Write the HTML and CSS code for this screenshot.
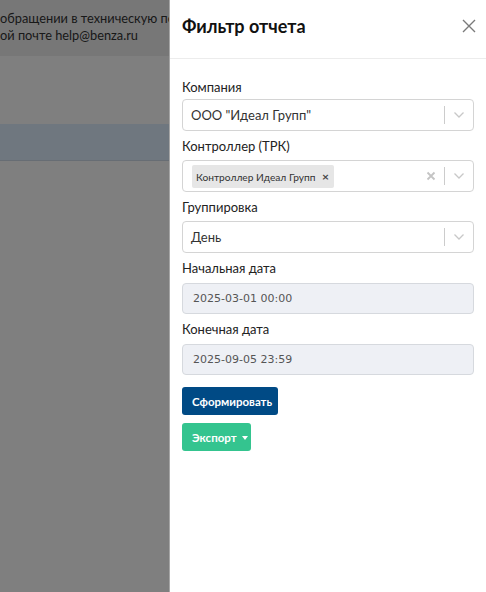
FILE: index.html
```html
<!DOCTYPE html>
<html lang="ru">
<head>
<meta charset="utf-8">
<link rel="stylesheet" href="styles.css">
</head>
<body>
<div class="page">
  <div class="notice">
    <p>обращении в техническую под</p>
    <p>ой почте help@benza.ru</p>
  </div>
  <div class="spacer"></div>
  <div class="table-head"></div>
  <div class="table-body"></div>
</div>
<div class="backdrop"></div>
<aside class="panel">
  <header class="panel-header">
    <h5 class="panel-title">Фильтр отчета</h5>
    <button class="close" aria-label="Закрыть">
      <svg width="14" height="14" viewBox="0 0 14 14"><path d="M1 1L13 13M13 1L1 13" stroke="#7a7a7a" stroke-width="1.4" fill="none"/></svg>
    </button>
  </header>
  <div class="panel-body">
    <div class="field">
      <label class="label">Компания</label>
      <div class="select">
        <span class="value">ООО "Идеал Групп"</span>
        <span class="sep"></span>
        <span class="chev"><svg width="12" height="8" viewBox="0 0 12 8"><path d="M1.5 1.5L6 6L10.5 1.5" stroke="#c8c8c8" stroke-width="1.3" fill="none"/></svg></span>
      </div>
    </div>
    <div class="field">
      <label class="label">Контроллер (ТРК)</label>
      <div class="select">
        <span class="chip">Контроллер Идеал Групп <span class="chip-x">×</span></span>
        <span class="clear"><svg width="10" height="10" viewBox="0 0 10 10"><path d="M1.5 1.5L8.5 8.5M8.5 1.5L1.5 8.5" stroke="#c4c4c4" stroke-width="1.8" fill="none"/></svg></span>
        <span class="sep"></span>
        <span class="chev"><svg width="12" height="8" viewBox="0 0 12 8"><path d="M1.5 1.5L6 6L10.5 1.5" stroke="#c8c8c8" stroke-width="1.3" fill="none"/></svg></span>
      </div>
    </div>
    <div class="field">
      <label class="label">Группировка</label>
      <div class="select">
        <span class="value">День</span>
        <span class="sep"></span>
        <span class="chev"><svg width="12" height="8" viewBox="0 0 12 8"><path d="M1.5 1.5L6 6L10.5 1.5" stroke="#c8c8c8" stroke-width="1.3" fill="none"/></svg></span>
      </div>
    </div>
    <div class="field">
      <label class="label">Начальная дата</label>
      <div class="input">2025-03-01 00:00</div>
    </div>
    <div class="field">
      <label class="label">Конечная дата</label>
      <div class="input">2025-09-05 23:59</div>
    </div>
    <div class="actions">
      <button class="btn btn-primary">Сформировать</button>
      <button class="btn btn-success">Экспорт <span class="caret"></span></button>
    </div>
  </div>
</aside>
</body>
</html>
```
FILE: styles.css
```css
* { box-sizing: border-box; }
html, body { margin: 0; padding: 0; }
body {
  width: 486px;
  height: 592px;
  overflow: hidden;
  font-family: "Lato", "Noto Sans", sans-serif;
  background: #fff;
  position: relative;
}
.page { display: flex; flex-direction: column; }
.notice {
  background: #eeeeee;
  height: 56px;
  padding-top: 10px;
  color: #333;
  font-size: 12.8px;
  line-height: 17px;
}
.notice p { margin: 0; white-space: nowrap; }
.spacer { height: 68px; background: #fff; }
.table-head { height: 37px; background: #dfeffe; border-bottom: 1px solid #cfdbe8; }
.table-body { height: 440px; background: #fff; }
.backdrop {
  position: fixed;
  inset: 0;
  background: rgba(0, 0, 0, 0.5);
}
.panel {
  position: fixed;
  top: 0;
  right: 0;
  bottom: 0;
  width: 317px;
  background: #fff;
  border-left: 1px solid rgba(0, 0, 0, 0.35);
  display: flex;
  flex-direction: column;
}
.panel-header {
  height: 59px;
  border-bottom: 1px solid #ececec;
  display: flex;
  align-items: center;
  justify-content: space-between;
  padding: 0 10px 0 12px;
}
.panel-title {
  margin: 0 0 6px;
  font-size: 18px;
  font-weight: 700;
  color: #111;
}
.close {
  border: 0;
  background: none;
  padding: 0;
  width: 14px;
  height: 14px;
  margin-bottom: 6px;
  display: flex;
}
.panel-body {
  padding: 18px 12px 0;
  display: flex;
  flex-direction: column;
}
.field { display: flex; flex-direction: column; margin-bottom: 5px; }
.label {
  font-size: 13px;
  line-height: 20px;
  color: #222;
  margin-bottom: 2px;
}
.field:first-child .label { margin-bottom: 0; }
.select {
  height: 32px;
  border: 1px solid #d4d4d4;
  border-radius: 4px;
  display: flex;
  align-items: center;
  padding-left: 8px;
  margin-top: 2px;
}
.value { flex: 1; font-size: 13px; color: #333; }
.chip {
  background: #e6e6e6;
  border-radius: 2px;
  font-size: 10.2px;
  color: #333;
  padding: 4px 5px 4px 4px;
  margin-left: 1px;
  white-space: nowrap;
}
.chip-x { font-size: 12px; margin-left: 4px; font-weight: 700; color: #444; }
.clear { margin-left: auto; display: flex; padding: 0 8px; }
.sep { width: 1px; height: 18px; background: #ccc; }
.chev { width: 28px; display: flex; justify-content: center; }
.input {
  height: 31px;
  border: 1px solid #d6d9de;
  border-radius: 4px;
  background: #eef0f5;
  font-family: "DejaVu Sans", sans-serif;
  font-size: 11px;
  color: #555;
  display: flex;
  align-items: center;
  padding-left: 10px;
  margin-top: 3px;
}
.actions { display: flex; flex-direction: column; align-items: flex-start; gap: 8px; margin-top: 7px; }
.btn {
  border: 0;
  border-radius: 3px;
  color: #fff;
  font-family: "Lato", "Noto Sans", sans-serif;
  font-size: 11.5px;
  font-weight: 700;
  height: 28px;
  padding: 0 10px;
  display: flex;
  align-items: center;
}
.btn-primary { background: #004a85; width: 96px; }
.btn-success { background: #34c48f; width: 69px; }
.caret {
  display: inline-block;
  width: 0; height: 0;
  border-left: 3.5px solid transparent;
  border-right: 3.5px solid transparent;
  border-top: 4px solid #fff;
  margin-left: 5px;
  margin-top: 1px;
}
```
